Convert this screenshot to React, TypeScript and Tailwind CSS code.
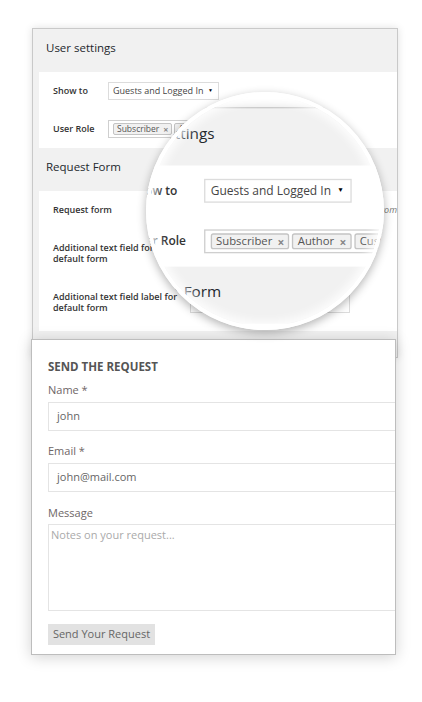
import React from 'react';

function Tag({ label }: { label: string }) {
  return (
    <span className="flex h-[12px] items-center gap-[4px] rounded-[2px] border border-[#c4c4c4] bg-[#f1f1f1] px-[3px] text-[8.5px] leading-none text-[#555]">
      {label}
      <span className="text-[9px] font-bold text-[#888]">×</span>
    </span>
  );
}

function SettingsPanel() {
  return (
    <div className="h-[330px] w-[366px] overflow-hidden border border-[#c9c9c9] bg-[#f1f1f1] font-['Open_Sans',sans-serif] text-[#23282d] shadow-[0_0_8px_rgba(0,0,0,0.12)]">
      <div className="h-[43px] pl-[13px] pt-[11px] text-[11.5px] leading-[16px]">User settings</div>

      <div className="ml-[6px] flex h-[76px] flex-col gap-[20px] bg-white pl-[14px] pt-[10px]">
        <div className="flex h-[18px] items-center">
          <span className="w-[55px] text-[9px] font-semibold text-[#333]">Show to</span>
          <div className="flex h-[18px] w-[111px] items-center justify-between border border-[#dcdcdc] pl-[4px] pr-[5px] text-[9px] text-[#444]">
            Guests and Logged In
            <span className="text-[5px] text-black">▼</span>
          </div>
        </div>
        <div className="flex h-[18px] items-center">
          <span className="w-[55px] text-[9px] font-semibold text-[#333]">User Role</span>
          <div className="flex h-[18px] items-center gap-[2px] border border-[#cfcfcf] px-[4px]">
            <Tag label="Subscriber" />
            <Tag label="Author" />
            <Tag label="Customer" />
          </div>
        </div>
      </div>

      <div className="h-[43px] pl-[13px] pt-[11px] text-[11.5px] leading-[16px]">Request Form</div>

      <div className="ml-[6px] flex h-[140px] flex-col bg-white pl-[14px] pt-[10px] text-[9px] font-semibold text-[#333]">
        <div className="flex h-[18px] items-center">
          <span className="w-[137px]">Request form</span>
          <div className="flex h-[18px] w-[110px] items-center justify-between border border-[#dcdcdc] px-[4px] font-normal text-[#444]">
            Default form
            <span className="text-[5px] text-black">▼</span>
          </div>
          <span className="flex-1 whitespace-nowrap text-right font-normal italic text-[#777]">pick one from</span>
        </div>
        <div className="mt-[21px] flex h-[26px] items-center">
          <span className="w-[137px] pr-[8px] leading-[11px]">Additional text field for default form</span>
          <div className="h-[22px] w-[160px] border border-[#dcdcdc]" />
        </div>
        <div className="mt-[23px] flex h-[26px] items-center">
          <span className="w-[137px] pr-[8px] leading-[11px]">Additional text field label for default form</span>
          <div className="h-[22px] w-[160px] border border-[#dcdcdc]" />
        </div>
      </div>
    </div>
  );
}

function RequestForm() {
  return (
    <div className="relative z-10 -mt-[19px] flex h-[316px] w-[365px] flex-col items-start overflow-hidden border border-[#bdbdbd] bg-white pl-[16px] pt-[19px] font-['Open_Sans',sans-serif] shadow-[0_2px_14px_rgba(0,0,0,0.18)]">
      <div className="text-[11.5px] font-bold leading-[16px] text-[#555]">SEND THE REQUEST</div>
      <div className="mt-[7px] text-[11px] leading-[16px] text-[#6e6666]">Name *</div>
      <div className="mt-[4px] flex h-[29px] w-[360px] shrink-0 items-center border border-[#e4e4e4] pl-[8px] text-[11px] text-[#666]">john</div>
      <div className="mt-[12px] text-[11px] leading-[16px] text-[#6e6666]">Email *</div>
      <div className="mt-[4px] flex h-[29px] w-[360px] shrink-0 items-center border border-[#e4e4e4] pl-[8px] text-[11px] text-[#666]">john@mail.com</div>
      <div className="mt-[13px] text-[11px] leading-[16px] text-[#6e6666]">Message</div>
      <div className="mt-[3px] h-[87px] w-[360px] shrink-0 border border-[#e4e4e4] pl-[2px] pt-[2px] text-[11px] leading-[16px] text-[#aaa]">Notes on your request...</div>
      <button className="mt-[13px] h-[21px] w-[107px] shrink-0 bg-[#e2e2e2] text-[11px] text-[#666]">Send Your Request</button>
    </div>
  );
}

function Magnifier() {
  return (
    <div className="absolute left-[146px] top-[92px] z-20 h-[238px] w-[238px]">
      <div className="absolute inset-0 overflow-hidden rounded-full bg-white">
        <div className="absolute left-[-43px] top-[15px] origin-top-left scale-[1.33]">
          <SettingsPanel />
        </div>
      </div>
      <div className="absolute inset-0 rounded-full border-[4px] border-white shadow-[inset_0_0_10px_4px_rgba(255,255,255,0.85),0_3px_10px_rgba(0,0,0,0.3)]" />
    </div>
  );
}

export default function App() {
  return (
    <div className="relative h-[702px] w-[422px] overflow-hidden bg-white">
      <div className="flex flex-col pl-[31px] pt-[28px]">
        <div className="ml-[1px]">
          <SettingsPanel />
        </div>
        <RequestForm />
      </div>
      <Magnifier />
    </div>
  );
}
